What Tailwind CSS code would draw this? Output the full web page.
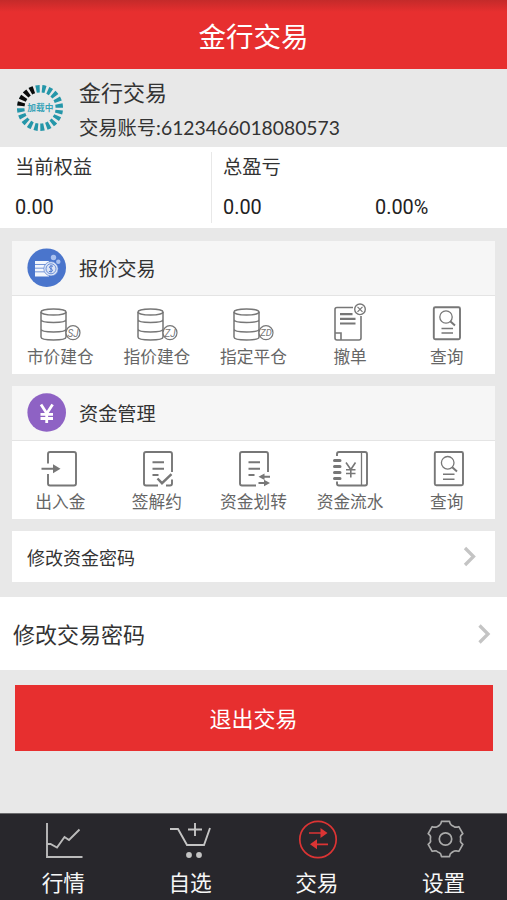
<!DOCTYPE html>
<html lang="zh-CN">
<head>
<meta charset="utf-8">
<meta name="viewport" content="width=device-width, initial-scale=1">
<title>金行交易</title>
<script src="https://cdn.jsdelivr.net/npm/@tailwindcss/browser@4"></script>
</head>
<body class="bg-[#e8e8e8]">
<div class="flex h-[900px] w-[507px] flex-col overflow-hidden bg-[#e8e8e8] font-[Roboto,'Noto_Sans_CJK_SC',sans-serif] text-[#333]">

  <header class="flex h-[69px] shrink-0 items-center justify-center bg-linear-to-b from-[#c42a2a] from-0% to-[#e72f2f] to-[12px] pt-[6px]">
    <h1 class="text-[27.5px] leading-none text-white">金行交易</h1>
  </header>

  <section class="flex h-[78px] shrink-0 items-center pl-4">
    <svg class="h-12 w-12 shrink-0" viewBox="0 0 48 48" fill="none">
      <g transform="rotate(186 24 24)" stroke-width="7.500">
        <circle cx="24" cy="24" r="19.3" stroke="#2496a9" pathLength="20" stroke-dasharray=".6 .4"/>
        <circle cx="24" cy="24" r="19.3" stroke="#e8e8e8" pathLength="20" stroke-dasharray="3.9 100"/>
        <circle cx="24" cy="24" r="19.3" stroke="#0a0a0a" pathLength="20" stroke-dasharray=".64 .36 .64 .36 .64 .36 .64 100"/>
      </g>
      <text x="24.3" y="27.3" text-anchor="middle" font-size="8.7" fill="#38a3b8" font-weight="700">加载中</text>
    </svg>
    <div class="ml-[15px] flex flex-col pt-[5px]">
      <span class="h-[34px] text-[22px] leading-[33px]">金行交易</span>
      <span class="h-[34px] font-[Lato,'Noto_Sans_CJK_SC',sans-serif] text-[19.3px] leading-[34px]">交易账号:6123466018080573</span>
    </div>
  </section>

  <section class="flex h-[81px] shrink-0 bg-white py-[5px]">
    <div class="flex w-[212px] flex-col border-r border-[#e8e8e8] pl-[15px]">
      <span class="h-[34px] text-[19.3px] leading-[32px]">当前权益</span>
      <span class="h-[37px] text-[19.9px] leading-[43px] text-[#222]">0.00</span>
    </div>
    <div class="flex flex-1 flex-col pl-[11px]">
      <span class="h-[34px] text-[19.3px] leading-[32px]">总盈亏</span>
      <div class="flex h-[37px] text-[19.9px] leading-[43px] text-[#222]">
        <span class="w-[152px]">0.00</span><span>0.00%</span>
      </div>
    </div>
  </section>

  <section class="mx-3 mt-[13px] h-[133px] shrink-0 bg-white">
    <div class="flex h-[55px] items-center border-b border-[#e4e4e4] bg-[#f6f6f6] pl-[15px]">
      <svg class="h-10 w-10" viewBox="0 0 40 40">
        <circle cx="19.700" cy="19.700" r="19.300" fill="#4a75cc"/>
        <path d="M8 13h14v3H8zM8 16.700h12v3H8zM8 20.500h12v3H8zM8 24.300h14v4.200H8z" fill="#f3f6fc"/>
        <circle cx="24" cy="20.800" r="7.200" fill="#dbe4f6" stroke="#4a75cc" stroke-width=".6"/>
        <circle cx="24" cy="20.800" r="5" fill="none" stroke="#6a8fd8" stroke-width="1"/>
        <path d="M26 18.300c-3-1.500-5 1.300-2 2.500s1 4-2 2.500M24 17.300v7" stroke="#4a75cc" fill="none"/>
        <circle cx="26.500" cy="9.500" r="2.700" fill="#a9c1ef"/><circle cx="31.300" cy="13.800" r="2.200" fill="#a9c1ef"/>
      </svg>
      <h2 class="ml-3 pt-[3px] text-[19.2px] leading-none">报价交易</h2>
    </div>
    <div class="grid grid-cols-5 pt-[5px] text-[16.7px] text-[#666]">
      <div class="flex flex-col items-center">
        <svg class="h-11 w-[60px]" viewBox="0 0 60 44" fill="none" stroke="#777" stroke-width="1.500">
          <ellipse cx="23.500" cy="11" rx="12.500" ry="3"/><path d="M11 11v25c0 4 25 4 25 0V11M11 18.500c0 4 25 4 25 0M11 28c0 4 25 4 25 0"/>
          <circle cx="43" cy="31.700" r="7" fill="#fff" stroke-width="1.200"/>
          <text x="43" y="35.500" text-anchor="middle" font-size="10" font-style="italic" fill="#777" stroke="none">SJ</text>
        </svg>
        <span class="pt-px leading-[24px]">市价建仓</span>
      </div>
      <div class="flex flex-col items-center">
        <svg class="h-11 w-[60px]" viewBox="0 0 60 44" fill="none" stroke="#777" stroke-width="1.500">
          <ellipse cx="23.500" cy="11" rx="12.500" ry="3"/><path d="M11 11v25c0 4 25 4 25 0V11M11 18.500c0 4 25 4 25 0M11 28c0 4 25 4 25 0"/>
          <circle cx="43" cy="31.700" r="7" fill="#fff" stroke-width="1.200"/>
          <text x="43" y="35.500" text-anchor="middle" font-size="10" font-style="italic" fill="#777" stroke="none">ZJ</text>
        </svg>
        <span class="pt-px leading-[24px]">指价建仓</span>
      </div>
      <div class="flex flex-col items-center">
        <svg class="h-11 w-[60px]" viewBox="0 0 60 44" fill="none" stroke="#777" stroke-width="1.500">
          <ellipse cx="23.500" cy="11" rx="12.500" ry="3"/><path d="M11 11v25c0 4 25 4 25 0V11M11 18.500c0 4 25 4 25 0M11 28c0 4 25 4 25 0"/>
          <circle cx="43" cy="31.700" r="7" fill="#fff" stroke-width="1.200"/>
          <text x="43" y="35.300" text-anchor="middle" font-size="9.500" font-style="italic" fill="#777" stroke="none">ZD</text>
        </svg>
        <span class="pt-px leading-[24px]">指定平仓</span>
      </div>
      <div class="flex flex-col items-center">
        <svg class="h-11 w-[60px]" viewBox="0 0 60 44" fill="none" stroke="#777" stroke-width="1.600">
          <path d="M33 6.500H17q-2 0-2 2V37q0 2 2 2h22q2 0 2-2V15M15 32h6v7"/>
          <path d="M20 13.200h12.500M20 17.800h15.500M20 22.500h15.500" stroke-width="2.200"/>
          <circle cx="40" cy="8.300" r="5.300" stroke-width="1.400"/><path d="m37.500 5.800 5 5m0-5-5 5" stroke-width="1.200"/>
        </svg>
        <span class="pt-px leading-[24px]">撤单</span>
      </div>
      <div class="flex flex-col items-center">
        <svg class="h-11 w-[60px]" viewBox="0 0 60 44" fill="none" stroke="#777" stroke-width="1.900">
          <rect x="16.800" y="6.300" width="26.200" height="32" rx="1.500"/>
          <circle cx="29" cy="16" r="6.200" stroke-width="1.300"/><path d="m33.200 20.300 4.800 4.200" stroke-width="2"/><path d="M24.500 27.500H36M24.500 32H36" stroke-width="1.600"/>
        </svg>
        <span class="pt-px leading-[24px]">查询</span>
      </div>
    </div>
  </section>

  <section class="mx-3 mt-3 h-[133px] shrink-0 bg-white">
    <div class="flex h-[55px] items-center border-b border-[#e4e4e4] bg-[#f6f6f6] pl-[15px]">
      <svg class="h-10 w-10" viewBox="0 0 40 40">
        <circle cx="19.700" cy="19.500" r="19.300" fill="#8e62c4"/>
        <path d="m14 11.500 5.800 9 5.800-9M19.700 20v10M13.500 21.300h12.500M13.500 25.500h12.500" fill="none" stroke="#fff" stroke-width="2.800"/>
      </svg>
      <h2 class="ml-3 pt-[3px] text-[19.2px] leading-none">资金管理</h2>
    </div>
    <div class="grid grid-cols-5 pt-[5px] text-[16.7px] text-[#666]">
      <div class="flex flex-col items-center">
        <svg class="h-11 w-[60px]" viewBox="0 0 60 44" fill="none" stroke="#777" stroke-width="1.900">
          <path d="M18 17.500V8q0-2 2-2h24q2 0 2 2v29.500q0 2-2 2H20q-2 0-2-2V28M11.500 22.700H24"/><path d="m23 18.200 7.500 4.500-7.500 4.500z" fill="#777" stroke="none"/>
        </svg>
        <span class="pt-px leading-[24px]">出入金</span>
      </div>
      <div class="flex flex-col items-center">
        <svg class="h-11 w-[60px]" viewBox="0 0 60 44" fill="none" stroke="#777" stroke-width="1.900">
          <path d="M31 39.500H19q-2 0-2-2V8q0-2 2-2h24q2 0 2 2v18M45 33.500v4q0 2-2 2h-4"/><path d="M25.500 16.300H37M25.500 22.700H37M25.500 29h6"/><path d="m30.500 32.500 4.500 4.700 9.500-9" stroke-width="2.400"/>
        </svg>
        <span class="pt-px leading-[24px]">签解约</span>
      </div>
      <div class="flex flex-col items-center">
        <svg class="h-11 w-[60px]" viewBox="0 0 60 44" fill="none" stroke="#777" stroke-width="1.900">
          <path d="M33 39.500H19q-2 0-2-2V8q0-2 2-2h24q2 0 2 2v18"/><path d="M25.500 16.300H37M25.500 22.700H37M25.500 29h6M38 30.700h9M35.500 37H44"/><path d="m41.500 27.500-6 3.200 6 3.200zM41 33.800 47 37l-6 3.200z" fill="#777" stroke="none"/>
        </svg>
        <span class="pt-px leading-[24px]">资金划转</span>
      </div>
      <div class="flex flex-col items-center">
        <svg class="h-11 w-[60px]" viewBox="0 0 60 44" fill="none" stroke="#777" stroke-width="1.900">
          <path d="M17 10V8q0-2 2-2h26q2 0 2 2v29.500q0 2-2 2H19q-2 0-2-2v-2"/><path d="M41.500 6v33.500" stroke-width="1.300"/>
          <path d="M14.500 14.500h5.500M14.500 20.500h5.500M14.500 26.500h5.500M14.500 32.500h5.500" stroke-width="3" stroke-linecap="round"/>
          <path d="m26 16.500 4.800 7L35.500 16.500M30.800 23v8.500M26 23.700h9.500M26 27.500h9.500" stroke-width="1.600"/>
        </svg>
        <span class="pt-px leading-[24px]">资金流水</span>
      </div>
      <div class="flex flex-col items-center">
        <svg class="h-11 w-[60px]" viewBox="0 0 60 44" fill="none" stroke="#777" stroke-width="1.900">
          <rect x="17.800" y="6" width="28.200" height="33.300" rx="1.500"/>
          <circle cx="30.700" cy="16.800" r="6.300" stroke-width="1.300"/><path d="m35.200 21.300 4.800 4.200" stroke-width="2"/><path d="M26 28.300h11.500M26 33.300h11.500" stroke-width="1.600"/>
        </svg>
        <span class="pt-px leading-[24px]">查询</span>
      </div>
    </div>
  </section>

  <div class="mx-3 mt-3 flex h-[51px] shrink-0 items-center justify-between bg-white pr-[18px] pl-[15px]">
    <span class="pt-[4px] text-[18px] leading-none">修改资金密码</span>
    <svg class="h-6 w-4" viewBox="0 0 16 24" fill="none" stroke="#c4c4c4" stroke-width="3.300"><path d="m4 3 8.500 8.500-8.500 8.500"/></svg>
  </div>

  <div class="mt-[15px] flex h-[73px] shrink-0 items-center justify-between bg-white pr-[15px] pl-[13px]">
    <span class="pt-[5px] text-[22px] leading-none">修改交易密码</span>
    <svg class="h-6 w-4" viewBox="0 0 16 24" fill="none" stroke="#c4c4c4" stroke-width="3.300"><path d="m3.500 3.500 8.500 8.500-8.500 8.500"/></svg>
  </div>

  <button class="mt-[15px] mr-[14px] ml-[15px] flex h-[66px] shrink-0 items-center justify-center bg-[#e72f2f] pt-[3px] pr-px text-[22px] leading-none text-white">退出交易</button>

  <nav class="mt-auto grid h-[87px] shrink-0 grid-cols-4 border-t border-[#6b6b6d] bg-[#28272c] pt-1 text-[21.7px] text-[#f7f7f7]">
    <div class="flex flex-col items-center">
      <svg class="h-11 w-[60px] shrink-0" viewBox="0 0 60 44" fill="none" stroke="#bbb" stroke-width="1.900"><path d="M14 5v34h35.500M14 26h3.500l6.500 3.500L31.500 19l4.500 3L46.500 11.500"/></svg>
      <span class="h-[38px] leading-[44px]">行情</span>
    </div>
    <div class="flex flex-col items-center">
      <svg class="h-11 w-[60px] shrink-0" viewBox="0 0 60 44" fill="none" stroke="#c4c4c4" stroke-width="1.900"><path d="M10 11h8l9 16h17l6-17M35 5v13M28 11.500h14"/><g fill="#c4c4c4" stroke="none"><circle cx="29" cy="37" r="2.900"/><circle cx="39" cy="37" r="2.900"/></g></svg>
      <span class="h-[38px] leading-[44px]">自选</span>
    </div>
    <div class="flex flex-col items-center">
      <svg class="h-11 w-[60px] shrink-0" viewBox="0 0 60 44" fill="none" stroke="#dc3434" stroke-width="1.700"><circle cx="31" cy="21.500" r="18.200"/><path d="M22 15h13M28 26.300h13"/><path d="m33.500 10 7 5-7 5zM30 21.300l-7 5 7 5z" fill="#dc3434" stroke="none"/></svg>
      <span class="h-[38px] leading-[44px]">交易</span>
    </div>
    <div class="flex flex-col items-center">
      <svg class="h-11 w-[60px] shrink-0" viewBox="0 0 60 44" fill="none" stroke="#aaa" stroke-width="1.700" stroke-linejoin="round"><circle cx="31.500" cy="21" r="6.200"/><path transform="translate(31.500 21)" d="M-4-17.700H4Q4.500-14.500 6-13.800T8.950-12.100Q10.500-11.400 13.330-12.310L17.330-5.390Q14.500-3 14.950-1.700T14.950 1.700Q14.500 3 17.330 5.390L13.330 12.310Q10.500 11.400 8.950 12.100T6 13.800Q4.500 14.500 4 17.700H-4Q-4.500 14.500-6 13.800T-8.950 12.100Q-10.500 11.400-13.330 12.310L-17.330 5.390Q-14.500 3-14.950 1.700T-14.950-1.700Q-14.500-3-17.330-5.390L-13.330-12.310Q-10.500-11.400-8.950-12.100T-6-13.800Q-4.500-14.500-4-17.700Z"/></svg>
      <span class="h-[38px] leading-[44px]">设置</span>
    </div>
  </nav>
</div>
</body>
</html>
